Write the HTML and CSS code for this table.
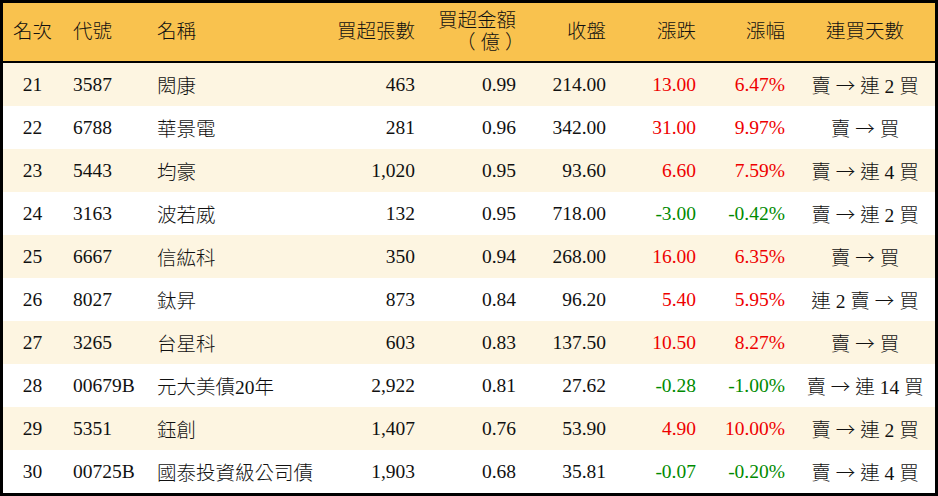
FILE: index.html
```html
<!DOCTYPE html>
<html lang="zh-Hant">
<head>
<meta charset="utf-8">
<title>買超排行</title>
<link rel="stylesheet" href="styles.css">
</head>
<body>
<div class="board">
  <div class="row head">
    <div class="c c1">名次</div>
    <div class="c c2">代號</div>
    <div class="c c3">名稱</div>
    <div class="c r">買超張數</div>
    <div class="c hc">買超金額<br><span class="unit">（億）</span></div>
    <div class="c r">收盤</div>
    <div class="c r">漲跌</div>
    <div class="c r">漲幅</div>
    <div class="c c9">連買天數</div>
  </div>
  <div class="row alt">
    <div class="c c1">21</div><div class="c c2">3587</div><div class="c c3">閎康</div>
    <div class="c r">463</div><div class="c r">0.99</div><div class="c r">214.00</div>
    <div class="c r up">13.00</div><div class="c r up">6.47%</div><div class="c c9">賣 <span class="arr">→</span> 連 2 買</div>
  </div>
  <div class="row">
    <div class="c c1">22</div><div class="c c2">6788</div><div class="c c3">華景電</div>
    <div class="c r">281</div><div class="c r">0.96</div><div class="c r">342.00</div>
    <div class="c r up">31.00</div><div class="c r up">9.97%</div><div class="c c9">賣 <span class="arr">→</span> 買</div>
  </div>
  <div class="row alt">
    <div class="c c1">23</div><div class="c c2">5443</div><div class="c c3">均豪</div>
    <div class="c r">1,020</div><div class="c r">0.95</div><div class="c r">93.60</div>
    <div class="c r up">6.60</div><div class="c r up">7.59%</div><div class="c c9">賣 <span class="arr">→</span> 連 4 買</div>
  </div>
  <div class="row">
    <div class="c c1">24</div><div class="c c2">3163</div><div class="c c3">波若威</div>
    <div class="c r">132</div><div class="c r">0.95</div><div class="c r">718.00</div>
    <div class="c r down">-3.00</div><div class="c r down">-0.42%</div><div class="c c9">賣 <span class="arr">→</span> 連 2 買</div>
  </div>
  <div class="row alt">
    <div class="c c1">25</div><div class="c c2">6667</div><div class="c c3">信紘科</div>
    <div class="c r">350</div><div class="c r">0.94</div><div class="c r">268.00</div>
    <div class="c r up">16.00</div><div class="c r up">6.35%</div><div class="c c9">賣 <span class="arr">→</span> 買</div>
  </div>
  <div class="row">
    <div class="c c1">26</div><div class="c c2">8027</div><div class="c c3">鈦昇</div>
    <div class="c r">873</div><div class="c r">0.84</div><div class="c r">96.20</div>
    <div class="c r up">5.40</div><div class="c r up">5.95%</div><div class="c c9">連 2 賣 <span class="arr">→</span> 買</div>
  </div>
  <div class="row alt">
    <div class="c c1">27</div><div class="c c2">3265</div><div class="c c3">台星科</div>
    <div class="c r">603</div><div class="c r">0.83</div><div class="c r">137.50</div>
    <div class="c r up">10.50</div><div class="c r up">8.27%</div><div class="c c9">賣 <span class="arr">→</span> 買</div>
  </div>
  <div class="row">
    <div class="c c1">28</div><div class="c c2">00679B</div><div class="c c3">元大美債20年</div>
    <div class="c r">2,922</div><div class="c r">0.81</div><div class="c r">27.62</div>
    <div class="c r down">-0.28</div><div class="c r down">-1.00%</div><div class="c c9">賣 <span class="arr">→</span> 連 14 買</div>
  </div>
  <div class="row alt">
    <div class="c c1">29</div><div class="c c2">5351</div><div class="c c3">鈺創</div>
    <div class="c r">1,407</div><div class="c r">0.76</div><div class="c r">53.90</div>
    <div class="c r up">4.90</div><div class="c r up">10.00%</div><div class="c c9">賣 <span class="arr">→</span> 連 2 買</div>
  </div>
  <div class="row">
    <div class="c c1">30</div><div class="c c2">00725B</div><div class="c c3">國泰投資級公司債</div>
    <div class="c r">1,903</div><div class="c r">0.68</div><div class="c r">35.81</div>
    <div class="c r down">-0.07</div><div class="c r down">-0.20%</div><div class="c c9">賣 <span class="arr">→</span> 連 4 買</div>
  </div>
</div>
</body>
</html>
```
FILE: styles.css
```css
html, body {
  margin: 0;
  padding: 0;
  background: #ffffff;
}
body {
  font-family: "Liberation Serif", "Noto Sans CJK TC", serif;
  font-size: 19.5px;
  font-weight: 300;
  color: #111111;
}
.board {
  width: 938px;
  height: 496px;
  box-sizing: border-box;
  border: 3px solid #000000;
  display: flex;
  flex-direction: column;
  overflow: hidden;
}
.row {
  display: grid;
  grid-template-columns: 59px 95px 163px 95px 101px 90px 90px 89px 1fr;
  height: 43px;
  align-items: center;
  background: #ffffff;
}
.row.alt {
  background: #fdf5e1;
}
.row.head {
  height: 58px;
  background: #f9c24e;
  border-bottom: 2px solid #000000;
  line-height: 22px;
}
.c {
  white-space: nowrap;
}
.c1 {
  text-align: center;
}
.c2 {
  padding-left: 11px;
}
.c3 {
  padding-left: 0;
}
.r {
  text-align: right;
}
.hc {
  text-align: right;
}
.unit {
  display: inline-block;
  width: 60px;
  text-align: center;
  letter-spacing: 5px;
}
.c9 {
  text-align: center;
  padding-left: 10px;
}
.arr {
  font-family: "Noto Sans CJK TC", sans-serif;
  font-weight: 300;
}
.up {
  color: #ee0000;
}
.down {
  color: #008a00;
}
```
